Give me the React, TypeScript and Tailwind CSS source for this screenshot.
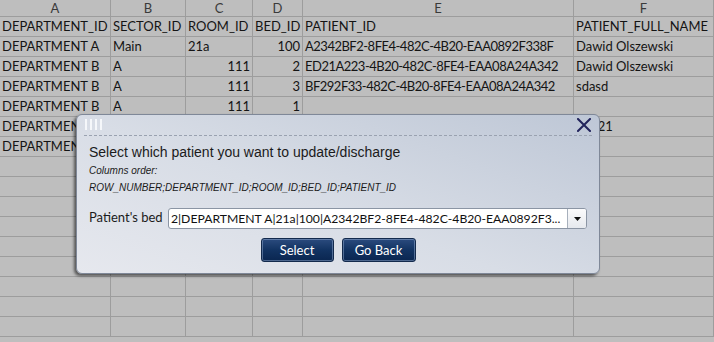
import React from "react";

const cols = [111, 75, 67, 50, 271, 140];

type Cell = { t: string; r?: boolean };
const rows: Cell[][] = [
  [{ t: "DEPARTMENT_ID" }, { t: "SECTOR_ID" }, { t: "ROOM_ID" }, { t: "BED_ID" }, { t: "PATIENT_ID" }, { t: "PATIENT_FULL_NAME" }],
  [{ t: "DEPARTMENT A" }, { t: "Main" }, { t: "21a" }, { t: "100", r: true }, { t: "A2342BF2-8FE4-482C-4B20-EAA0892F338F" }, { t: "Dawid Olszewski" }],
  [{ t: "DEPARTMENT B" }, { t: "A" }, { t: "111", r: true }, { t: "2", r: true }, { t: "ED21A223-4B20-482C-8FE4-EAA08A24A342" }, { t: "Dawid Olszewski" }],
  [{ t: "DEPARTMENT B" }, { t: "A" }, { t: "111", r: true }, { t: "3", r: true }, { t: "BF292F33-482C-4B20-8FE4-EAA08A24A342" }, { t: "sdasd" }],
  [{ t: "DEPARTMENT B" }, { t: "A" }, { t: "111", r: true }, { t: "1", r: true }, { t: "" }, { t: "" }],
  [{ t: "DEPARTMENT B" }, { t: "A" }, { t: "111", r: true }, { t: "4", r: true }, { t: "" }, { t: "test21" }],
  [{ t: "DEPARTMENT B" }, { t: "A" }, { t: "" }, { t: "" }, { t: "" }, { t: "" }],
];
const emptyRows = 9;

export default function App() {
  return (
    <div className="relative w-[714px] h-[342px] overflow-hidden bg-[#bebebe] text-[#141414]" style={{ fontFamily: "Lato, 'Liberation Sans', sans-serif" }}>
      <div className="flex flex-col">
        <div className="flex h-[17px]">
          {["A", "B", "C", "D", "E", "F"].map((l, i) => (
            <div key={l} style={{ width: cols[i] }} className="shrink-0 border-r border-b border-[#9d9d9d] text-center text-[13px] leading-[16px] text-[#3a3a3a]">
              {l}
            </div>
          ))}
        </div>
        {rows.map((row, ri) => (
          <div key={ri} className="flex h-[20px]">
            {row.map((c, ci) => (
              <div
                key={ci}
                style={{ width: cols[ci] }}
                className={`shrink-0 border-r border-b border-[#9d9d9d] px-[2px] text-[13px] leading-[19px] whitespace-nowrap overflow-hidden ${ci === 4 && ri > 0 ? "tracking-[-0.5px]" : ""} ${c.r ? "text-right" : "text-left"}`}
              >
                {c.t}
              </div>
            ))}
          </div>
        ))}
        {Array.from({ length: emptyRows }).map((_, ri) => (
          <div key={"e" + ri} className="flex h-[20px]">
            {cols.map((w, ci) => (
              <div key={ci} style={{ width: w }} className="shrink-0 border-r border-b border-[#9d9d9d]" />
            ))}
          </div>
        ))}
      </div>

      {/* Dialog */}
      <div
        className="absolute left-[76px] top-[114px] w-[524px] h-[160px] rounded-[6px] border border-[#7f8898] bg-[linear-gradient(200deg,#bec7d6_0%,#d8dde6_55%,#e6e8ee_100%)] shadow-[-2px_2px_3px_rgba(0,0,0,0.55)] flex flex-col"
        style={{ fontFamily: "'Liberation Sans', Arial, sans-serif" }}
      >
        <div className="relative h-[21px] mx-[7px] border-b border-dashed border-[#9aa2b0]">
          <div className="absolute left-[1px] top-[4px] flex gap-[3px]">
            <div className="w-[2px] h-[11px] bg-[#f5f7fa]" />
            <div className="w-[2px] h-[11px] bg-[#f5f7fa]" />
            <div className="w-[2px] h-[11px] bg-[#f5f7fa]" />
            <div className="w-[2px] h-[11px] bg-[#f5f7fa]" />
          </div>
          <svg className="absolute right-[1px] top-[3px]" width="14" height="14" viewBox="0 0 14 14">
            <path d="M1 1 L13 13 M13 1 L1 13" stroke="#22245c" strokeWidth="2" strokeLinecap="square" />
          </svg>
        </div>
        <div className="pl-[12px] mt-[8px] text-[14px] leading-[16px] text-[#1b1b1b]">
          Select which patient you want to update/discharge
        </div>
        <div className="pl-[12px] mt-[3px] text-[10px] leading-[16px] italic text-[#1b1b1b]">Columns order:</div>
        <div className="pl-[12px] mt-[1px] text-[10px] leading-[16px] italic text-[#1b1b1b]">
          ROW_NUMBER;DEPARTMENT_ID;ROOM_ID;BED_ID;PATIENT_ID
        </div>
        <div className="flex items-center mt-[12px] pl-[12px]" style={{ fontFamily: "Lato, 'Liberation Sans', sans-serif" }}>
          <div className="w-[79px] text-[13px] leading-[16px] text-[#1b1b1b] -mt-[3px]">Patient's bed</div>
          <div className="flex h-[21px] w-[419px] rounded-[3px] border border-[#8b95a4] bg-white overflow-hidden">
            <div className="flex-1 px-[2px] text-[12.2px] leading-[19px] text-[#111] whitespace-nowrap overflow-hidden">
              2|DEPARTMENT A|21a|100|A2342BF2-8FE4-482C-4B20-EAA0892F3...
            </div>
            <div className="w-[19px] border-l border-[#a7b0bc] bg-[linear-gradient(#fbfbfc,#e6e9ee)] flex items-center justify-center">
              <svg width="7" height="4" viewBox="0 0 7 4">
                <path d="M0 0 H7 L3.5 4 Z" fill="#111" />
              </svg>
            </div>
          </div>
        </div>
        <div className="flex justify-center gap-[8px] mt-[9px]" style={{ fontFamily: "Lato, 'Liberation Sans', sans-serif" }}>
          <button className="w-[73px] h-[24px] rounded-[3px] border border-[#132a4d] bg-[linear-gradient(#2b4b7e,#123362_50%,#0a2650)] shadow-[inset_0_0_0_1px_rgba(160,185,220,0.45)] text-white text-[13px] leading-[20px]">
            Select
          </button>
          <button className="w-[74px] h-[24px] rounded-[3px] border border-[#132a4d] bg-[linear-gradient(#2b4b7e,#123362_50%,#0a2650)] shadow-[inset_0_0_0_1px_rgba(160,185,220,0.45)] text-white text-[13px] leading-[20px]">
            Go Back
          </button>
        </div>
      </div>
    </div>
  );
}
